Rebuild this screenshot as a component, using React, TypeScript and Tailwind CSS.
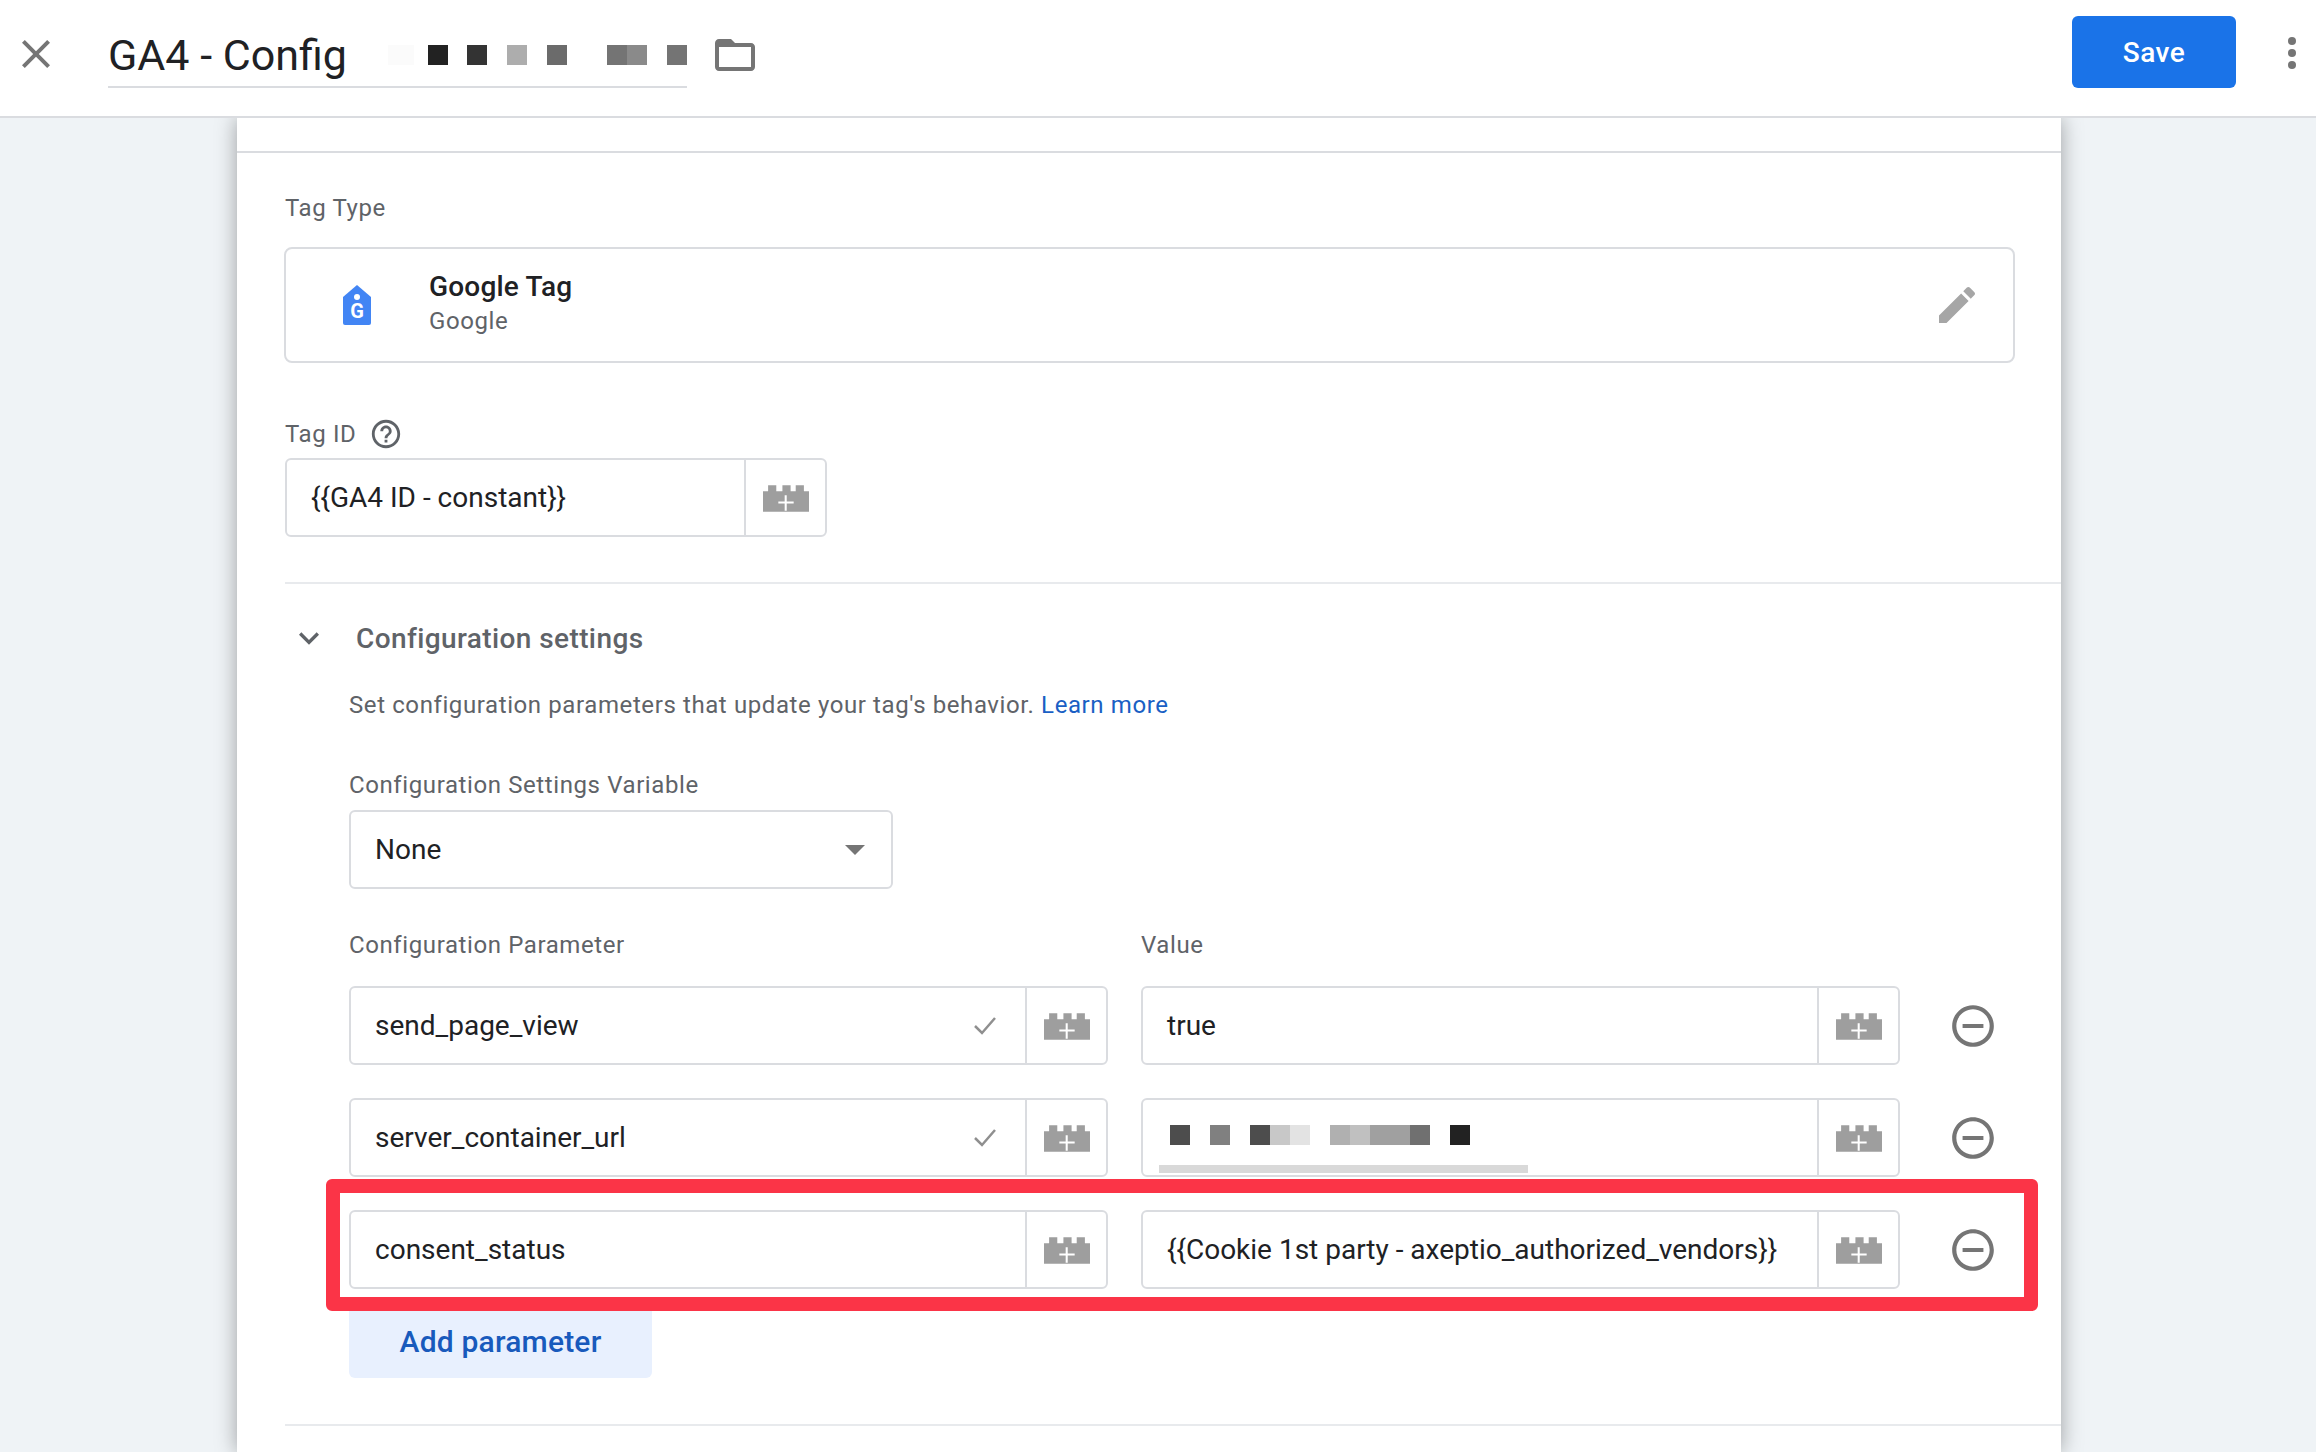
import React from 'react'

const brickPath =
  'M5 6V0h8v6h6V0h8v6h5V0h8v6h5v20H0V6z'

function Brick() {
  return (
    <svg width="46" height="27" viewBox="0 0 45 26" className="mt-[2px] shrink-0">
      <path d={brickPath} fill="#9e9e9e" />
      <path d="M15 16h6.200V9.800h2V16H30v2h-6.800v7h-2v-7H15z" fill="#fff" />
    </svg>
  )
}

function MaterialIcon({ d, size, color, className }: { d: string; size: number; color: string; className?: string }) {
  return (
    <svg width={size} height={size} viewBox="0 0 24 24" className={className}>
      <path d={d} fill={color} />
    </svg>
  )
}

const minusCircle =
  'M7 11v2h10v-2H7zm5-9C6.480 2 2 6.480 2 12s4.480 10 10 10 10-4.480 10-10S17.520 2 12 2zm0 18c-4.410 0-8-3.590-8-8s3.590-8 8-8 8 3.590 8 8-3.590 8-8 8z'

function FieldShell({ width, children, check }: { width: string; children: React.ReactNode; check?: boolean }) {
  return (
    <div className={`relative flex h-[79px] ${width} items-center rounded-[6px] border-2 border-[#dadce0] bg-white`}>
      <div className="flex h-full min-w-0 flex-1 items-center pl-[24px] text-[28px] text-[#202124]">{children}</div>
      {check && (
        <svg width="24" height="19" viewBox="0 0 24 19" className="mr-[28px] shrink-0">
          <path d="M2 10l7 7L22 2" fill="none" stroke="#8f8f8f" strokeWidth="2.500" />
        </svg>
      )}
      <div className="flex h-full w-[81px] shrink-0 items-center justify-center border-l-2 border-[#dadce0]">
        <Brick />
      </div>
    </div>
  )
}

function Block({ color }: { color: string }) {
  return <div className="h-[20px] w-[20px]" style={{ background: color }} />
}

function ParamRow({ name, value, check }: { name: string; value: React.ReactNode; check?: boolean }) {
  return (
    <div className="flex items-center">
      <FieldShell width="w-[759px]" check={check}>
        {name}
      </FieldShell>
      <div className="ml-[33px]">
        <FieldShell width="w-[759px]">{value}</FieldShell>
      </div>
      <MaterialIcon d={minusCircle} size={50} color="#757575" className="ml-[48px]" />
    </div>
  )
}

function MaskedValue() {
  return (
    <>
      <div className="mb-[5px] ml-[3px] flex">
        <Block color="#4d4d4d" />
        <div className="w-[20px]" />
        <Block color="#808080" />
        <div className="w-[20px]" />
        <Block color="#4d4d4d" />
        <Block color="#c8c8c8" />
        <Block color="#e3e3e3" />
        <div className="w-[20px]" />
        <Block color="#b0b0b0" />
        <Block color="#c0c0c0" />
        <Block color="#a0a0a0" />
        <Block color="#a0a0a0" />
        <Block color="#707070" />
        <div className="w-[20px]" />
        <Block color="#222222" />
      </div>
      <div className="absolute bottom-[2px] left-[16px] h-[8px] w-[369px] bg-[#d9d9d9]" />
    </>
  )
}

export default function App() {
  return (
    <div className="flex h-[1452px] w-[2316px] flex-col overflow-hidden bg-[#eff3f6] font-['Roboto',sans-serif]">
      <header className="relative z-10 flex h-[118px] shrink-0 items-center border-b-2 border-[#dadce0] bg-white">
        <MaterialIcon
          d="M19 6.410 17.590 5 12 10.590 6.410 5 5 6.410 10.590 12 5 17.590 6.410 19 12 13.410 17.590 19 19 17.590 13.410 12z"
          size={48}
          color="#757575"
          className="mb-[8px] ml-[12px]"
        />
        <div className="ml-[48px] flex h-[60px] w-[579px] items-center border-b-2 border-[#dadce0] pb-[4px]">
          <span className="w-[284px] text-[43px] leading-none text-[#202124]">GA4 - Config</span>
          <div className="flex">
            <div className="h-[20px] w-[26px] bg-[#fbfbfb]" />
            <div className="w-[14px]" />
            <Block color="#222222" />
            <div className="w-[19px]" />
            <Block color="#333333" />
            <div className="w-[20px]" />
            <Block color="#adadad" />
            <div className="w-[20px]" />
            <Block color="#6b6b6b" />
            <div className="w-[40px]" />
            <Block color="#747474" />
            <Block color="#8a8a8a" />
            <div className="w-[20px]" />
            <Block color="#747474" />
          </div>
        </div>
        <MaterialIcon
          d="M20 6h-8l-2-2H4c-1.100 0-1.990.9-1.990 2L2 18c0 1.100.9 2 2 2h16c1.100 0 2-.9 2-2V8c0-1.100-.9-2-2-2zm0 12H4V8h16v10z"
          size={48}
          color="#757575"
          className="mb-[6px] ml-[24px]"
        />
        <button className="mb-[12px] ml-auto h-[72px] w-[164px] rounded-[6px] bg-[#1a73e8] pt-[2px] text-[28px] font-medium tracking-[0.5px] text-white">
          Save
        </button>
        <div className="mr-[20px] mb-[10px] ml-[52px] flex flex-col gap-[4px]">
          <div className="h-[8px] w-[8px] rounded-full bg-[#757575]" />
          <div className="h-[8px] w-[8px] rounded-full bg-[#757575]" />
          <div className="h-[8px] w-[8px] rounded-full bg-[#757575]" />
        </div>
      </header>

      <main className="ml-[237px] w-[1824px] flex-1 bg-white shadow-[0_0_20px_rgba(0,0,0,0.35)]">
        <div className="h-[35px] border-b-2 border-[#dadce0]" />
        <div className="pl-[48px]">
          <div className="mt-[39px] text-[24px] leading-[32px] tracking-[0.6px] text-[#5f6368]">Tag Type</div>
          <div className="mt-[23px] mr-[46px] -ml-[1px] flex h-[116px] items-center rounded-[8px] border-2 border-[#dadce0]">
            <svg width="28" height="40" viewBox="0 0 28 40" className="ml-[57px]">
              <path d="M14 0 28 12v26a2 2 0 0 1-2 2H2a2 2 0 0 1-2-2V12z" fill="#4285f4" />
              <circle cx="14" cy="12" r="3" fill="#fff" />
              <text x="14" y="33" textAnchor="middle" fontSize="20" fontWeight="700" fontFamily="Roboto" fill="#fff">
                G
              </text>
            </svg>
            <div className="mb-[2px] ml-[58px] flex flex-col">
              <span className="text-[28px] leading-[34px] font-medium tracking-[0.2px] text-[#202124]">Google Tag</span>
              <span className="text-[24px] leading-[34px] tracking-[0.6px] text-[#5f6368]">Google</span>
            </div>
            <MaterialIcon
              d="M3 17.250V21h3.750L17.810 9.940l-3.750-3.750L3 17.250zM20.710 7.040c.39-.39.39-1.020 0-1.410l-2.340-2.340c-.39-.39-1.020-.39-1.410 0l-1.830 1.830 3.750 3.750 1.830-1.830z"
              size={48}
              color="#a6a6a6"
              className="mr-[32px] ml-auto"
            />
          </div>

          <div className="mt-[55px] flex h-[32px] items-center text-[24px] tracking-[0.6px] text-[#5f6368]">
            Tag ID
            <MaterialIcon
              d="M11 18h2v-2h-2v2zm1-16C6.480 2 2 6.480 2 12s4.480 10 10 10 10-4.480 10-10S17.520 2 12 2zm0 18c-4.410 0-8-3.590-8-8s3.590-8 8-8 8 3.590 8 8-3.590 8-8 8zm0-14c-2.210 0-4 1.790-4 4h2c0-1.100.9-2 2-2s2 .9 2 2c0 2-3 1.750-3 5h2c0-2.250 3-2.500 3-5 0-2.210-1.790-4-4-4z"
              size={34}
              color="#5f6368"
              className="ml-[13px]"
            />
          </div>
          <div className="mt-[8px]">
            <FieldShell width="w-[542px]">{'{{GA4 ID - constant}}'}</FieldShell>
          </div>

          <div className="mt-[45px] border-t-2 border-[#e8eaed]" />

          <div className="mt-[35px] flex h-[40px] items-center">
            <MaterialIcon
              d="M16.590 8.590 12 13.170 7.410 8.590 6 10l6 6 6-6z"
              size={40}
              color="#5f6368"
              className="mb-[3px] ml-[4px]"
            />
            <span className="ml-[27px] text-[28px] font-medium tracking-[0.4px] text-[#5f6368]">
              Configuration settings
            </span>
          </div>

          <div className="pl-[64px]">
            <div className="mt-[30px] text-[24px] leading-[32px] tracking-[0.6px] text-[#5f6368]">
              Set configuration parameters that update your tag's behavior.{' '}
              <span className="text-[#1a5fc4]">Learn more</span>
            </div>
            <div className="mt-[48px] text-[24px] leading-[32px] tracking-[0.6px] text-[#5f6368]">
              Configuration Settings Variable
            </div>
            <div className="mt-[9px] flex h-[79px] w-[544px] items-center rounded-[6px] border-2 border-[#dadce0] pr-[26px] pl-[24px] text-[28px] text-[#202124]">
              None
              <svg width="20" height="10" viewBox="0 0 20 10" className="ml-auto">
                <path d="M0 0h20L10 10z" fill="#757575" />
              </svg>
            </div>

            <div className="mt-[40px] flex text-[24px] leading-[32px] tracking-[0.6px] text-[#5f6368]">
              <span className="w-[792px]">Configuration Parameter</span>
              <span>Value</span>
            </div>

            <div className="relative mt-[25px] flex flex-col gap-[33px]">
              <ParamRow name="send_page_view" value="true" check />
              <ParamRow name="server_container_url" value={<MaskedValue />} check />
              <ParamRow name="consent_status" value="{{Cookie 1st party - axeptio_authorized_vendors}}" />
              <div className="absolute top-[193px] left-[-23px] h-[132px] w-[1712px] rounded-[6px] border-[14px] border-[#fb3447]" />
            </div>

            <button className="mt-[16px] h-[73px] w-[303px] rounded-[6px] bg-[#e8f0fe] text-[30px] font-medium tracking-[0.2px] text-[#185abc]">
              Add parameter
            </button>
          </div>

          <div className="mt-[46px] border-t-2 border-[#e8eaed]" />
        </div>
      </main>
    </div>
  )
}
